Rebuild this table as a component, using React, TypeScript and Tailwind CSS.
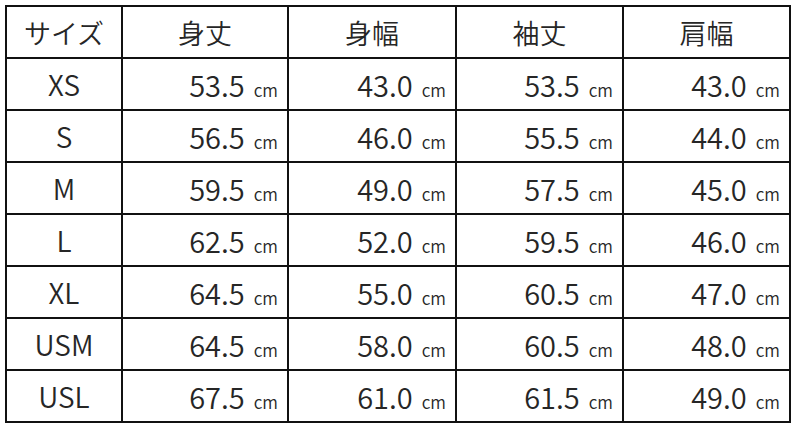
import React from 'react';

const headers = ['サイズ', '身丈', '身幅', '袖丈', '肩幅'];

const rows: [string, string, string, string, string][] = [
  ['XS', '53.5', '43.0', '53.5', '43.0'],
  ['S', '56.5', '46.0', '55.5', '44.0'],
  ['M', '59.5', '49.0', '57.5', '45.0'],
  ['L', '62.5', '52.0', '59.5', '46.0'],
  ['XL', '64.5', '55.0', '60.5', '47.0'],
  ['USM', '64.5', '58.0', '60.5', '48.0'],
  ['USL', '67.5', '61.0', '61.5', '49.0'],
];

const font = { fontFamily: '"Noto Sans CJK JP", "Noto Sans", sans-serif' };

export default function App() {
  return (
    <div className="w-[800px] h-[431px] bg-white pt-[5px] pl-[5px]" style={font}>
      <table className="table-fixed border-collapse w-[786px] text-[#262626] font-[350]">
        <colgroup>
          <col className="w-[116px]" />
          <col className="w-[166px]" />
          <col className="w-[168px]" />
          <col className="w-[167px]" />
          <col className="w-[167px]" />
        </colgroup>
        <thead>
          <tr className="h-[52px]">
            {headers.map((h) => (
              <th key={h} className="border-2 border-[#111] font-[350] text-[27px] text-center p-0 leading-none">
                {h}
              </th>
            ))}
          </tr>
        </thead>
        <tbody>
          {rows.map((r) => (
            <tr key={r[0]} className="h-[52px]">
              <td className="border-2 border-[#111] text-center text-[28px] leading-none p-0">{r[0]}</td>
              {r.slice(1).map((v, i) => (
                <td key={i} className="border-2 border-[#111] text-right pr-[9px] p-0 leading-none whitespace-nowrap">
                  <span className="text-[29px]">{v}</span>
                  <span className="text-[17px] ml-[9px]">cm</span>
                </td>
              ))}
            </tr>
          ))}
        </tbody>
      </table>
    </div>
  );
}
